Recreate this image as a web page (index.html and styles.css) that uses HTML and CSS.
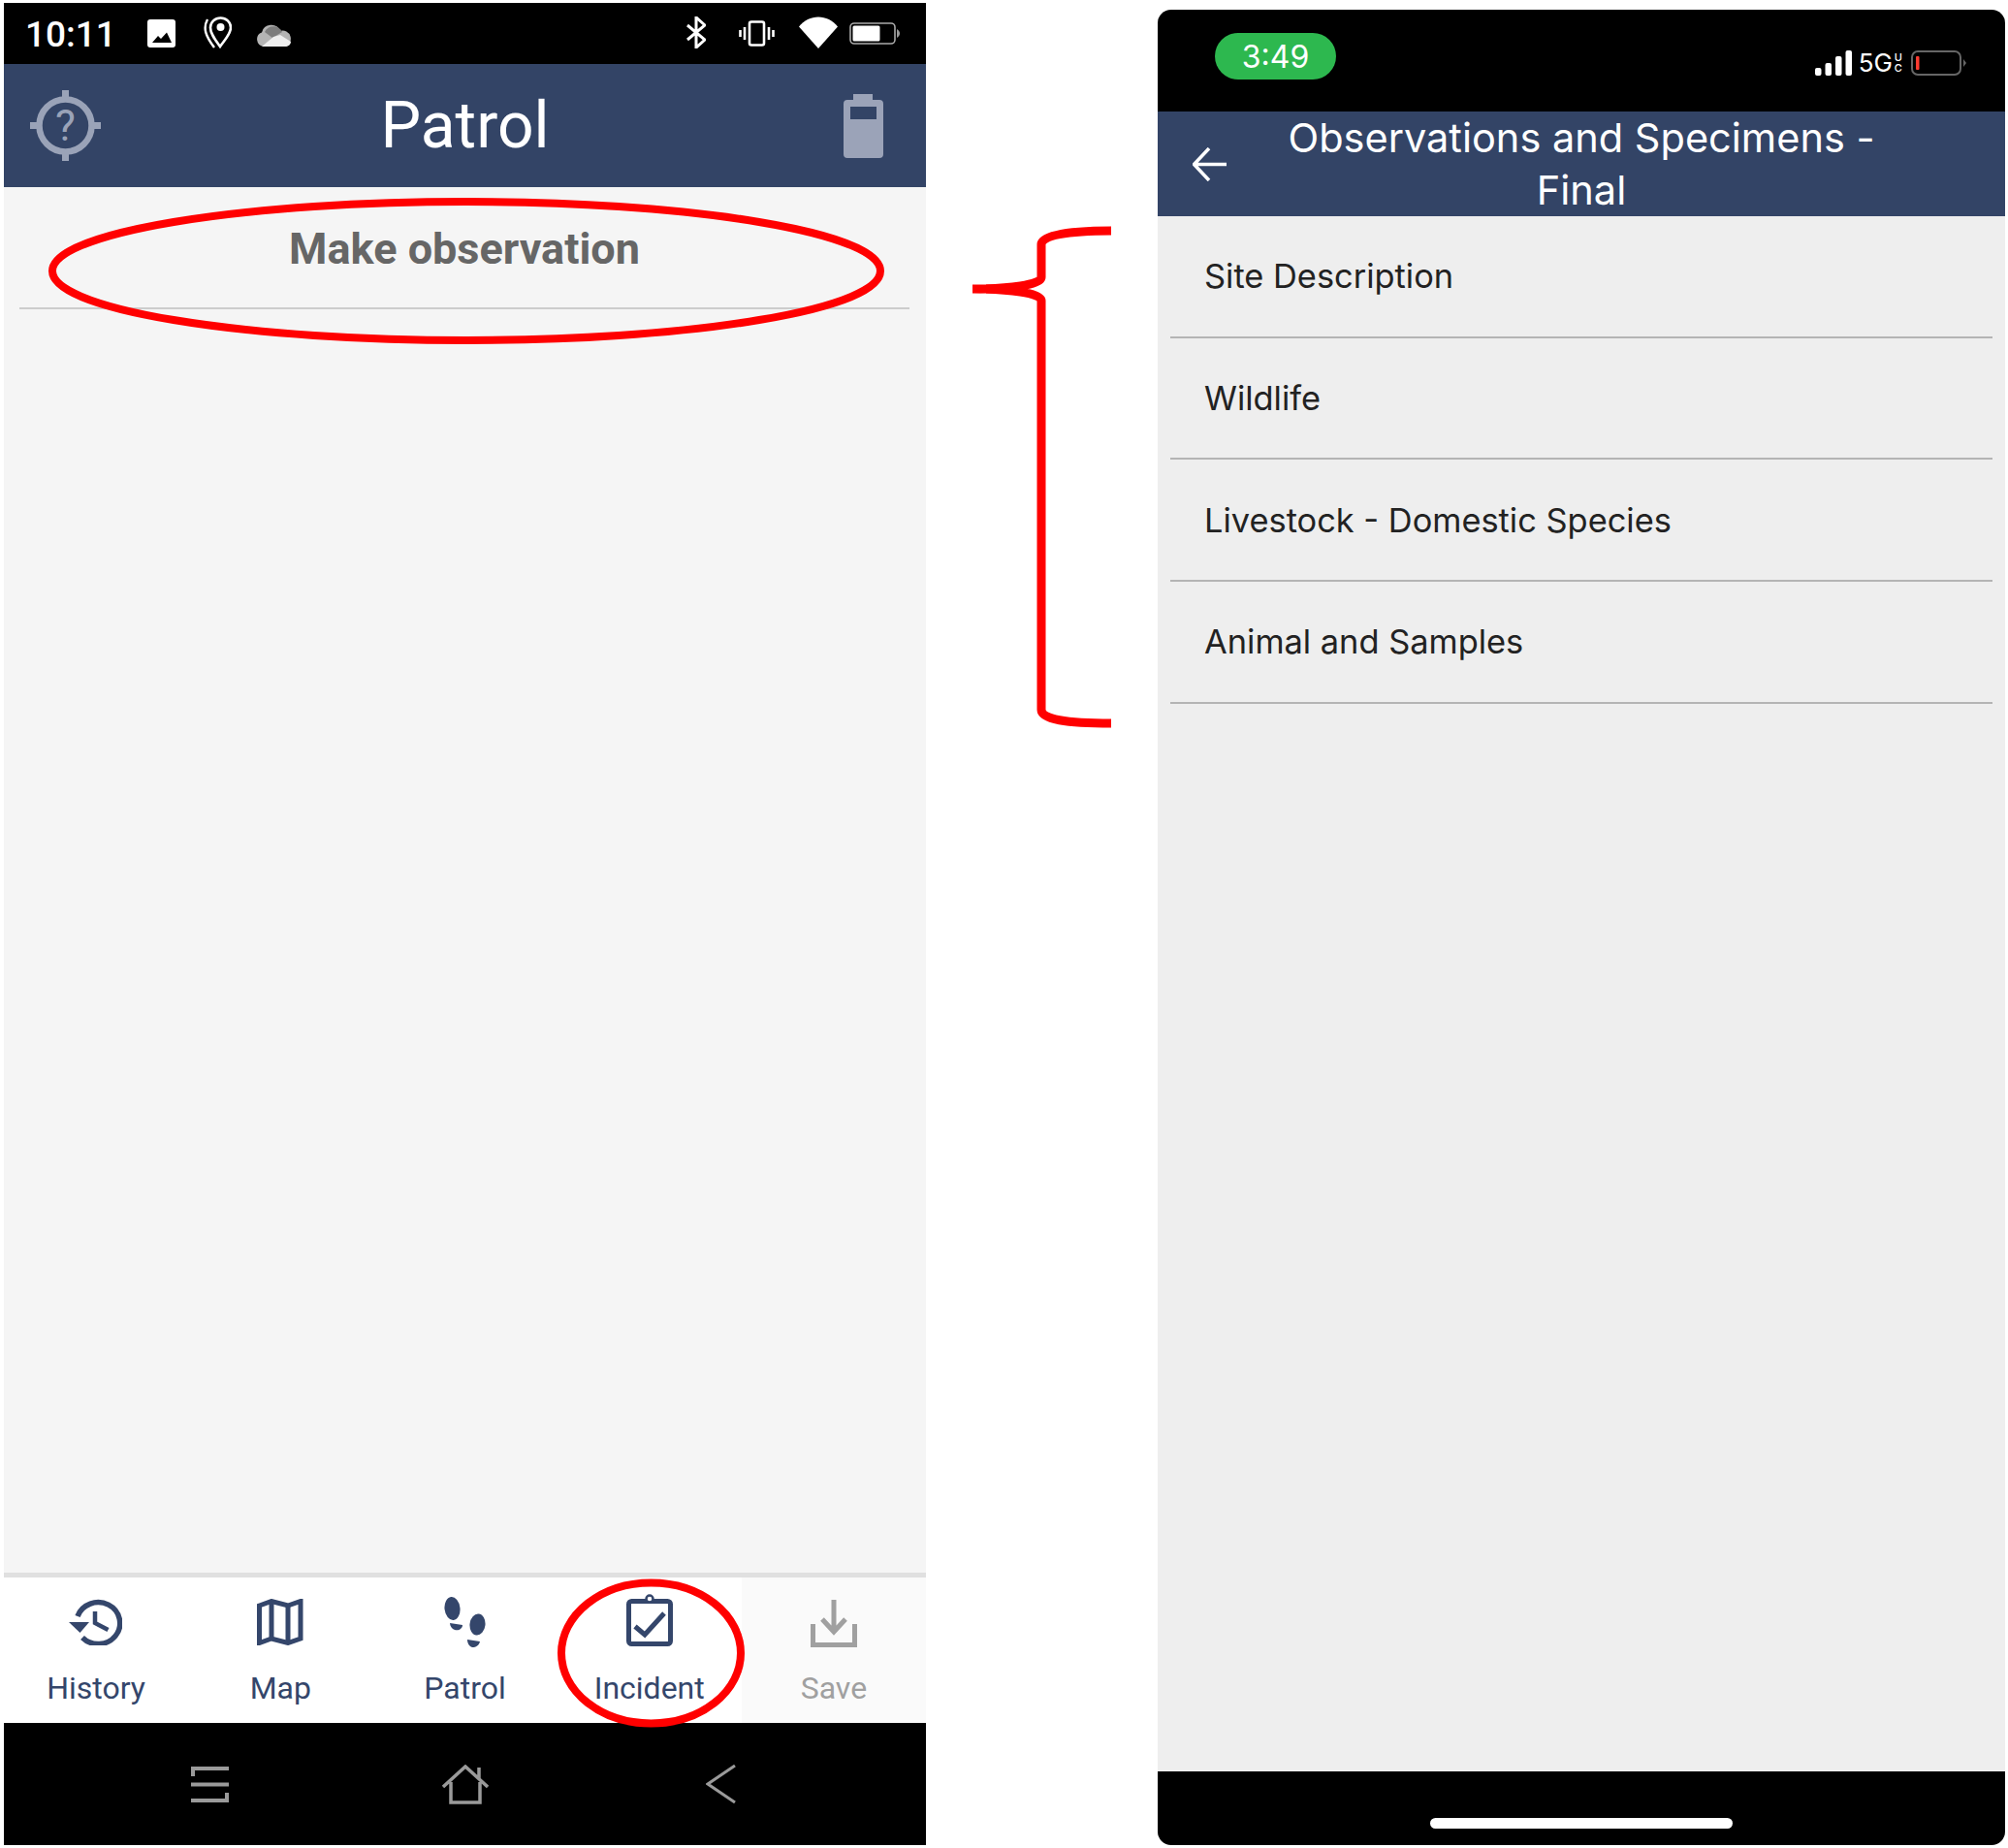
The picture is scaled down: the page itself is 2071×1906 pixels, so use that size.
FILE: index.html
```html
<!DOCTYPE html>
<html lang="en">
<head>
<meta charset="utf-8">
<title>Patrol and Observations</title>
<link rel="stylesheet" href="styles.css">
</head>
<body>
<main class="page">
  <section class="android">
    <div class="a-status">
      <span class="a-time">10:11</span>
      <svg class="ic-image" viewBox="0 0 29 29"><rect width="29" height="29" rx="3" fill="#fff"/><path d="M5 24 11 17 14 20 20 13.5 25 24Z" fill="#000"/></svg>
      <svg class="ic-pin" viewBox="0 0 29 33" fill="none" stroke="#fff"><path d="M17 31C12 24 7 18 7 11.5A10.5 10 0 0 1 28 11.5C28 18 22 24 17 31Z" stroke-width="2.6"/><circle cx="17.5" cy="11" r="4" fill="#fff" stroke="none"/><path d="M4 3C-1 12 2 20 11 32" stroke-width="2.4"/></svg>
      <svg class="ic-cloud" viewBox="0 0 37 24"><path d="M8 24A7.5 7.5 0 0 1 6 9.5 10 10 0 0 1 25 8 8 8 0 0 1 30 24Z" fill="#b4b4b4"/><path d="M9 9 17 15 27 9A10 10 0 0 0 9 9Z" fill="#7d7d7d"/><path d="M6 24 18 14 25 12 36 19C36 22 33 24 30 24Z" fill="#eee"/></svg>
      <div class="a-status-right">
        <svg class="ic-bt" viewBox="0 0 20 33" fill="none" stroke="#fff" stroke-width="3"><path d="M1 9 19 24 10 32V1L19 9 1 24"/></svg>
        <svg class="ic-vib" viewBox="0 0 37 27" fill="none" stroke="#fff" stroke-width="2.6"><rect x="11" y="1.5" width="15" height="24" rx="2"/><path d="M6 7V20M31 7V20M1.500 10V17M35.500 10V17"/></svg>
        <svg class="ic-wifi" viewBox="0 0 40 33"><path d="M0 10.500C10-3 30-3 40 10.500L20 33Z" fill="#fff"/></svg>
        <svg class="ic-batt" viewBox="0 0 52 23"><rect x="1" y="1" width="46" height="21" rx="4" fill="none" stroke="#aaa" stroke-width="1.600"/><rect x="3.500" y="3.500" width="28" height="16" rx="1.500" fill="#fff"/><path d="M49 7C51 8 52 10 52 11.500S51 15 49 16Z" fill="#999"/></svg>
      </div>
    </div>
    <header class="a-header">
      <svg class="ic-target" viewBox="0 0 73 73" fill="none" stroke="#9aa3b8"><circle cx="36.500" cy="36.500" r="27" stroke-width="6.500"/><path d="M36.500 0V9M36.500 64V73M0 36.500H9M64 36.500H73" stroke-width="7"/><text x="36.500" y="52" class="ic-q">?</text></svg>
      <h1 class="a-title">Patrol</h1>
      <svg class="ic-pack" viewBox="0 0 41 66"><path d="M10 0H30V6H37Q41 6 41 10V62Q41 66 37 66H4Q0 66 0 62V10Q0 6 4 6H10Z" fill="#9ba3b8"/><rect x="7" y="13" width="27" height="13" fill="#334466"/></svg>
    </header>
    <div class="a-body">
      <div class="a-item">Make observation</div>
    </div>
    <nav class="tabs">
      <div class="tab">
        <svg class="tab-ic ic-hist" viewBox="0 0 55 48" fill="none" stroke="#34466b"><path d="M9 18A22.500 21.500 0 1 1 14 40" stroke-width="5.500"/><path d="M0 24H21L11.500 35Z" fill="#34466b" stroke="none"/><path d="M27 13V25L40.500 32" stroke-width="4.500"/></svg>
        <span class="tab-label">History</span>
      </div>
      <div class="tab">
        <svg class="tab-ic ic-map" viewBox="0 0 48 48" fill="none" stroke="#34466b" stroke-width="5"><path d="M2.500 7 15 2.500 32 7 45 2.500V41L32 45.500 15 41 2.500 45.500Z"/><path d="M15 2.500V41M32 7V45.500"/></svg>
        <span class="tab-label">Map</span>
      </div>
      <div class="tab">
        <svg class="tab-ic ic-feet" viewBox="0 0 43 52" fill="#34466b"><ellipse cx="8.500" cy="12" rx="8" ry="12" transform="rotate(-6 8.500 12)"/><path d="M6 27 19 29C19 33 15 35 11 34 8 33 6 30 6 27Z"/><ellipse cx="34.500" cy="28.500" rx="8" ry="11" transform="rotate(6 34.500 28.500)"/><path d="M24 44 37 46C36 50 33 52 29 52 26 51 24 48 24 44Z"/></svg>
        <span class="tab-label">Patrol</span>
      </div>
      <div class="tab">
        <svg class="tab-ic ic-clip" viewBox="0 0 48 54" fill="none" stroke="#34466b"><rect x="2.500" y="7.500" width="43" height="44" rx="3" stroke-width="5"/><circle cx="24" cy="5" r="3.500" fill="#fff" stroke-width="2.500"/><path d="M9 33.500 19 42 39 20" stroke-width="5"/></svg>
        <span class="tab-label">Incident</span>
      </div>
      <div class="tab tab-off">
        <svg class="tab-ic ic-save" viewBox="0 0 48 49" fill="none" stroke="#a0a0a0" stroke-width="5"><path d="M2.500 25V46.500H45.500V25"/><path d="M24 0V32M12 20 24 33 36 20"/></svg>
        <span class="tab-label">Save</span>
      </div>
    </nav>
    <div class="a-nav">
      <svg class="ic-menu" viewBox="0 0 39 37" fill="none" stroke="#9a9a9a" stroke-width="4"><path d="M2 10V2H39M0 18.500H39M0 35H37V27"/></svg>
      <svg class="ic-home" viewBox="0 0 48 41" fill="none" stroke="#9a9a9a" stroke-width="3.500"><path d="M1 23 24 2 47 23M9 18V39H39V18M38 3V14"/></svg>
      <svg class="ic-back" viewBox="0 0 31 40" fill="none" stroke="#9a9a9a" stroke-width="3"><path d="M30 1 2 20 30 39"/></svg>
    </div>
  </section>

  <section class="ios">
    <div class="i-status">
      <span class="i-pill">3:49</span>
      <div class="i-status-right">
        <svg class="ic-signal" viewBox="0 0 38 26" fill="#fff"><rect y="18" width="6.500" height="8" rx="2"/><rect x="10.500" y="13" width="6.500" height="13" rx="2"/><rect x="21" y="6" width="6.500" height="20" rx="2"/><rect x="31.500" width="6.500" height="26" rx="2"/></svg>
        <span class="i-5g">5G</span>
        <span class="i-uc">U<br>C</span>
        <svg class="ic-ibatt" viewBox="0 0 57 26"><rect x="1" y="1" width="50" height="24" rx="6" fill="none" stroke="#666" stroke-width="2"/><rect x="5" y="6" width="3.500" height="14" rx="1" fill="#ff3b30"/><path d="M54 9 57 13 54 17Z" fill="#666"/></svg>
      </div>
    </div>
    <header class="i-header">
      <svg class="ic-arrow" viewBox="0 0 35 35" fill="none" stroke="#fff" stroke-width="3.500"><path d="M35 17.500H2M17 1 1.500 17.500 17 34"/></svg>
      <h2 class="i-title">Observations and Specimens -<br>Final</h2>
    </header>
    <div class="i-body">
      <div class="i-row">Site Description</div>
      <div class="i-row">Wildlife</div>
      <div class="i-row">Livestock - Domestic Species</div>
      <div class="i-row">Animal and Samples</div>
    </div>
    <div class="i-foot"><span class="i-home"></span></div>
  </section>

  <svg class="annotations" viewBox="0 0 2071 1906" fill="none" stroke="#ff0000">
    <ellipse cx="481" cy="279.500" rx="427" ry="71.500" stroke-width="8"/>
    <ellipse cx="671.500" cy="1705" rx="92.500" ry="72.500" stroke-width="8"/>
    <path d="M1146 238C1100 238 1074 243 1074 252V286C1074 294 1040 298 1003 298 1040 298 1074 302 1074 310V732C1074 742 1100 746 1146 746" stroke-width="9"/>
  </svg>
</main>
</body>
</html>
```

FILE: styles.css
```css
* { box-sizing: border-box; }
html, body { margin: 0; padding: 0; background: #fff; }
body { font-family: Roboto, "Liberation Sans", sans-serif; }

.page {
  position: relative;
  width: 2071px;
  height: 1906px;
  overflow: hidden;
  display: flex;
  align-items: flex-start;
  padding-left: 4px;
}

/* Left phone */
.android {
  width: 951px;
  height: 1900px;
  margin-top: 3px;
  display: flex;
  flex-direction: column;
  background: #f5f5f5;
}
.a-status {
  height: 63px;
  flex: none;
  background: #000;
  display: flex;
  align-items: center;
  padding: 0 27px 0 22px;
  color: #fff;
}
.a-time { width: 126px; margin-top: 2px; font-size: 37px; font-weight: 500; }
.ic-image { width: 29px; height: 29px; margin-right: 29px; margin-top: -1px; }
.ic-pin { width: 29px; height: 33px; margin-right: 25px; margin-top: -3px; }
.ic-cloud { width: 37px; height: 24px; margin-top: 2px; }
.a-status-right { margin-left: auto; display: flex; align-items: center; }
.ic-bt { width: 20px; height: 33px; margin-right: 34px; margin-top: -3px; }
.ic-vib { width: 37px; height: 27px; margin-right: 25px; }
.ic-wifi { width: 40px; height: 33px; margin-right: 12px; margin-top: -3px; }
.ic-batt { width: 52px; height: 23px; }

.a-header {
  height: 127px;
  flex: none;
  background: #334466;
  display: grid;
  grid-template-columns: 1fr auto 1fr;
  align-items: center;
  padding: 0 33px;
}
.ic-target { width: 73px; height: 73px; margin-left: -6px; }
.ic-q { font-family: Roboto, sans-serif; font-size: 44px; fill: #9aa3b8; stroke: none; text-anchor: middle; }
.a-title { margin: 0; font-size: 66px; font-weight: 400; color: #fff; line-height: 1; }
.ic-pack { width: 41px; height: 66px; justify-self: end; margin-right: 11px; }

.a-body { flex: 1; padding: 0 17px 0 16px; }
.a-item {
  height: 126px;
  padding-top: 2px;
  border-bottom: 2px solid #ccc;
  display: flex;
  align-items: center;
  justify-content: center;
  font-size: 45px;
  font-weight: 700;
  color: #666;
}

.tabs {
  height: 155px;
  flex: none;
  display: flex;
  background: #fff;
  border-top: 5px solid #e0e0e0;
}
.tab {
  flex: 1;
  display: flex;
  flex-direction: column;
  align-items: center;
  padding-top: 20px;
}
.tab-off { background: #fafafa; }
.tab-ic { height: 54px; }
.ic-hist { width: 55px; height: 48px; margin: 2px 0 4px -2px; }
.ic-map { width: 48px; height: 48px; margin: 2px 0 4px; }
.ic-feet { width: 43px; height: 52px; margin-bottom: 2px; }
.ic-clip { width: 48px; height: 54px; margin-top: -3px; margin-bottom: 3px; }
.ic-save { width: 48px; height: 49px; margin: 3px 0 2px; }
.tab-label { margin-top: 20px; font-size: 32px; line-height: 40px; color: #34466b; }
.tab-off .tab-label { color: #a0a0a0; }

.a-nav {
  height: 126px;
  flex: none;
  background: #000;
  display: flex;
  align-items: center;
  justify-content: center;
  gap: 224px;
  padding-right: 4px;
}
.ic-menu { width: 39px; height: 37px; margin-right: -4px; }
.ic-home { width: 48px; height: 41px; }
.ic-back { width: 31px; height: 40px; }

/* Right phone */
.ios {
  width: 874px;
  height: 1893px;
  margin-top: 10px;
  margin-left: 239px;
  border-radius: 14px;
  overflow: hidden;
  display: flex;
  flex-direction: column;
  background: #eee;
  font-family: Inter, Roboto, sans-serif;
}
.i-status {
  height: 105px;
  flex: none;
  background: #000;
  display: flex;
  align-items: flex-start;
  padding: 24px 40px 0 59px;
}
.i-pill {
  width: 125px;
  height: 48px;
  border-radius: 24px;
  background: #2db84f;
  color: #fff;
  font-size: 32px;
  line-height: 50px;
  text-align: center;
}
.i-status-right {
  margin-left: auto;
  margin-top: 18px;
  display: flex;
  align-items: center;
  color: #fff;
}
.ic-signal { width: 38px; height: 26px; margin-right: 7px; }
.i-5g { font-size: 26px; line-height: 26px; margin-right: 2px; }
.i-uc { font-size: 11px; line-height: 11px; font-weight: 500; margin-right: 9px; }
.ic-ibatt { width: 57px; height: 26px; }

.i-header {
  height: 108px;
  flex: none;
  background: #334466;
  display: grid;
  grid-template-columns: 71px 1fr 71px;
  align-items: center;
  padding-left: 36px;
  padding-right: 36px;
}
.ic-arrow { width: 35px; height: 35px; }
.i-title {
  margin: 0;
  font-size: 41.500px;
  font-weight: 400;
  line-height: 54px;
  text-align: center;
  color: #fff;
  white-space: nowrap;
}

.i-body { flex: 1; padding: 0 13px; background: #eee; }
.i-row {
  height: 125.700px;
  border-bottom: 2px solid #b4b4b4;
  display: flex;
  align-items: center;
  padding-left: 35px;
  font-size: 34.400px;
  color: #222;
}
.i-foot {
  height: 76px;
  flex: none;
  background: #000;
  display: flex;
  justify-content: center;
  padding-top: 48px;
}
.i-home { width: 312px; height: 11px; border-radius: 6px; background: #fff; }

/* Red hand-drawn annotations lying over everything */
.annotations {
  position: absolute;
  left: 0;
  top: 0;
  width: 2071px;
  height: 1906px;
  pointer-events: none;
}
```
